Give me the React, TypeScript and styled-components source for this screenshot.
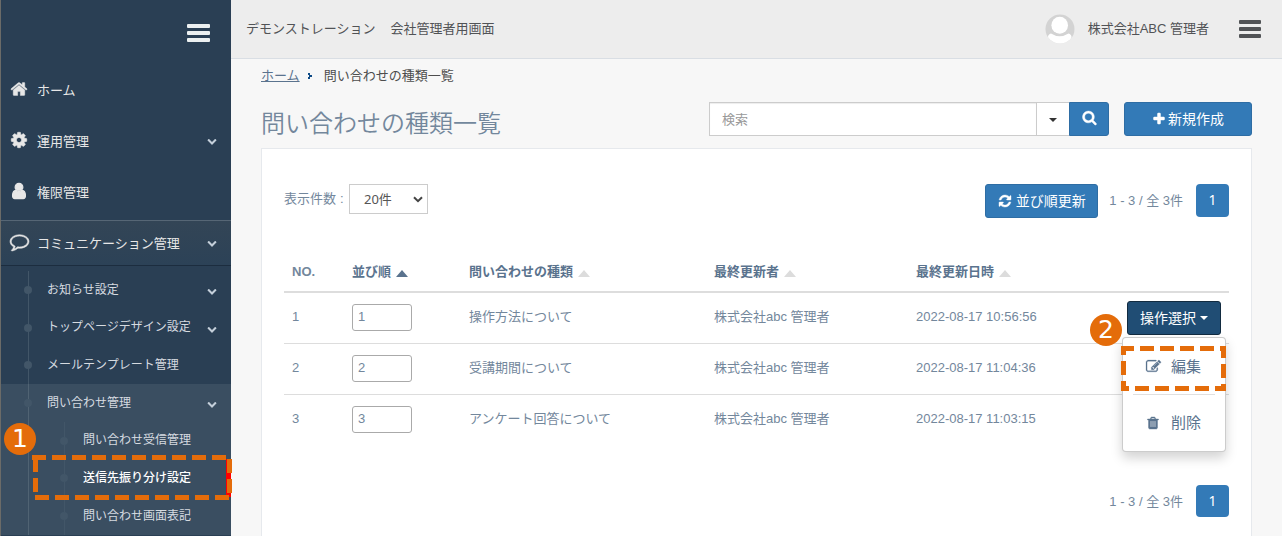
import React from "react";
import styled, { createGlobalStyle, css } from "styled-components";

const GlobalStyle = createGlobalStyle`
  *, *::before, *::after { box-sizing: border-box; }
  html, body { margin: 0; padding: 0; overflow: hidden; }
  body {
    font-family: "Liberation Sans", "Noto Sans CJK JP", sans-serif;
    font-size: 13px;
    line-height: 20px;
    color: #73879c;
    background: #f7f7f7;
  }
  input, select, button { font: inherit; }
`;

const ICONS = {
  home: "M1472 992v480q0 26-19 45t-45 19h-384v-384h-256v384h-384q-26 0-45-19t-19-45v-480q0-1 .5-3t.5-3l575-474 575 474q1 2 1 6zm223-69l-62 74q-8 9-21 11h-3q-13 0-21-7l-692-577-692 577q-12 8-24 7-13-2-21-11l-62-74q-8-10-7-23.5t11-21.5l719-599q32-26 76-26t76 26l244 204v-195q0-14 9-23t23-9h192q14 0 23 9t9 23v408l219 182q10 8 11 21.5t-7 23.5z",
  cog: "M1152 896q0-106-75-181t-181-75-181 75-75 181 75 181 181 75 181-75 75-181zm512-109v222q0 12-8 23t-20 13l-185 28q-19 54-39 91 35 50 107 138 10 12 10 25t-9 23q-27 37-99 108t-94 71q-12 0-26-9l-138-108q-44 23-91 38-16 136-29 186-7 28-36 28h-222q-14 0-24.5-8.5t-11.5-21.5l-28-184q-49-16-90-37l-141 107q-10 9-25 9-14 0-25-11-126-114-165-168-7-10-7-23 0-12 8-23 15-21 51-66.5t54-70.5q-27-50-41-99l-183-27q-13-2-21-12.5t-8-23.5v-222q0-12 8-23t19-13l186-28q14-46 39-92-40-57-107-138-10-12-10-24 0-10 9-23 26-36 98.5-107.5t94.5-71.5q13 0 26 10l138 107q44-23 91-38 16-136 29-186 7-28 36-28h222q14 0 24.5 8.5t11.5 21.5l28 184q49 16 90 37l142-107q9-9 24-9 13 0 25 10 129 119 165 170 7 8 7 22 0 12-8 23-15 21-51 66.5t-54 70.5q26 50 41 98l183 28q13 2 21 12.5t8 23.5z",
  user: "M1536 1399q0 109-62.5 187t-150.5 78h-854q-88 0-150.5-78t-62.5-187q0-85 8.5-160.5t31.5-152 58.5-131 94-89 134.5-34.5q131 128 313 128t313-128q76 0 134.5 34.5t94 89 58.5 131 31.5 152 8.5 160.5zm-256-887q0 159-112.5 271.5t-271.5 112.5-271.5-112.5-112.5-271.5 112.5-271.5 271.5-112.5 271.5 112.5 112.5 271.5z",
  comment: "M896 384q-204 0-381.5 69.5t-282 187.5-104.5 255q0 112 71.5 213.5t201.5 175.5l87 50-27 96q-24 91-70 172 152-63 275-171l43-38 57 6q69 8 130 8 204 0 381.5-69.5t282-187.5 104.5-255-104.5-255-282-187.5-381.5-69.5zm896 512q0 174-120 321.5t-326 233-450 85.5q-70 0-145-8-198 175-460 242-49 14-114 22h-5q-15 0-27-10.5t-16-27.5v-1q-3-4-.5-12t2-10 4.5-9.5l6-9 7-8.5 8-9q7-8 31-34.5t34.5-38 31-39.5 32.5-51 27-59 26-76q-157-89-247.5-220t-90.5-281q0-130 71-248.5t191-204.5 286-136.5 348-50.5 348 50.5 286 136.5 191 204.5 71 248.5z",
  edit: "M888 1184l116-116-152-152-116 116v56h96v96h56zm440-720q-16-16-33 1l-350 350q-17 17-1 33t33-1l350-350q17-17 1-33zm80 594v190q0 119-84.5 203.5t-203.5 84.5h-832q-119 0-203.5-84.5t-84.5-203.5v-832q0-119 84.5-203.5t203.5-84.5h832q63 0 117 25 15 7 18 23 3 17-9 29l-49 49q-14 14-32 8-23-6-45-6h-832q-66 0-113 47t-47 113v832q0 66 47 113t113 47h832q66 0 113-47t47-113v-126q0-13 9-22l64-64q15-15 35-7t20 29zm-96-738l288 288-672 672h-288v-288zm444 132l-92 92-288-288 92-92q28-28 68-28t68 28l152 152q28 28 28 68t-28 68z",
  trash: "M704 1376v-704q0-14-9-23t-23-9h-64q-14 0-23 9t-9 23v704q0 14 9 23t23 9h64q14 0 23-9t9-23zm256 0v-704q0-14-9-23t-23-9h-64q-14 0-23 9t-9 23v704q0 14 9 23t23 9h64q14 0 23-9t9-23zm256 0v-704q0-14-9-23t-23-9h-64q-14 0-23 9t-9 23v704q0 14 9 23t23 9h64q14 0 23-9t9-23zm-544-992h448l-48-117q-7-9-17-11h-317q-10 2-17 11zm928 32v64q0 14-9 23t-23 9h-96v948q0 83-47 143.5t-113 60.5h-832q-66 0-113-58.5t-47-141.5v-952h-96q-14 0-23-9t-9-23v-64q0-14 9-23t23-9h309l70-167q15-37 54-63t79-26h320q40 0 79 26t54 63l70 167h309q14 0 23 9t9 23z",
  refresh: "M1639 1056q0 5-1 7-64 268-268 434.5t-478 166.5q-146 0-282.5-55t-243.5-157l-129 129q-19 19-45 19t-45-19-19-45v-448q0-26 19-45t45-19h448q26 0 45 19t19 45-19 45l-137 137q71 66 161 102t187 36q134 0 250-65t186-179q11-17 53-117 8-23 30-23h192q13 0 22.5 9.5t9.5 22.5zm25-800v448q0 26-19 45t-45 19h-448q-26 0-45-19t-19-45 19-45l138-138q-148-137-349-137-134 0-250 65t-186 179q-11 17-53 117-8 23-30 23h-199q-13 0-22.5-9.5t-9.5-22.5v-7q65-268 270-434.5t480-166.5q146 0 284 55.5t245 156.5l130-129q19-19 45-19t45 19 19 45z",
  search: "M1216 832q0-185-131.5-316.5t-316.5-131.5-316.5 131.5-131.5 316.5 131.5 316.5 316.5 131.5 316.5-131.5 131.5-316.5zm512 832q0 52-38 90t-90 38q-54 0-90-38l-343-342q-179 124-399 124-143 0-273.5-55.5t-225-150-150-225-55.5-273.5 55.5-273.5 150-225 225-150 273.5-55.5 273.5 55.5 225 150 150 225 55.5 273.5q0 220-124 399l343 343q37 37 37 90z",
  plus: "M1600 736v192q0 40-28 68t-68 28h-416v416q0 40-28 68t-68 28h-192q-40 0-68-28t-28-68v-416h-416q-40 0-68-28t-28-68v-192q0-40 28-68t68-28h416v-416q0-40 28-68t68-28h192q40 0 68 28t28 68v416h416q40 0 68 28t28 68z",
  chevron: "M1683 808l-742 741q-19 19-45 19t-45-19l-742-741q-19-19-19-45.5t19-45.5l166-165q19-19 45-19t45 19l531 531 531-531q19-19 45-19t45 19l166 165q19 19 19 45.5t-19 45.5z",
};

type IconName = keyof typeof ICONS;

const IconSvg = styled.svg<{ $bold?: number }>`
  display: block;
  flex: none;
  overflow: visible;
  fill: currentColor;
  stroke: currentColor;
  stroke-width: ${(p) => p.$bold ?? 0};
`;

const Icon = ({ name, size, bold }: { name: IconName; size: number; bold?: number }) => (
  <IconSvg width={size} height={size} viewBox="0 0 1792 1792" $bold={bold}>
    <path d={ICONS[name]} />
  </IconSvg>
);

const Page = styled.div`
  position: relative;
  display: flex;
  width: 1282px;
  height: 536px;
  overflow: hidden;
`;

/* ---------- sidebar ---------- */

const Sidebar = styled.nav`
  width: 231px;
  height: 536px;
  flex: none;
  overflow: hidden;
  background: #2a3f54;
  border-left: 1px solid #6b6b68;
`;

const SidebarTop = styled.div`
  display: flex;
  justify-content: flex-end;
  height: 67px;
  padding: 24px 21px 0 0;
`;

const Bars = styled.div<{ $color: string; $width: number }>`
  width: ${(p) => p.$width}px;
  height: 18px;
  display: flex;
  flex-direction: column;
  justify-content: space-between;
  span {
    height: 4px;
    border-radius: 1px;
    background: ${(p) => p.$color};
  }
`;

const Hamburger = ({ color, width }: { color: string; width: number }) => (
  <Bars $color={color} $width={width}>
    <span />
    <span />
    <span />
  </Bars>
);

const MenuItem = styled.div<{ $active?: boolean }>`
  display: flex;
  align-items: center;
  height: 46px;
  margin-bottom: 5px;
  padding: 0 14px 0 9px;
  color: #e7e7e7;
  ${(p) =>
    p.$active &&
    css`
      margin-bottom: 0;
      background: linear-gradient(#334556, #2c4257);
      border-top: 1px solid #566675;
      border-bottom: 1px solid #1c2d3f;
    `}
`;

const MenuIcon = styled.span`
  width: 27px;
  padding-bottom: 3px;
`;

const MenuLabel = styled.span`
  flex: 1;
  padding-top: 1px;
  white-space: nowrap;
`;

const Chevron = styled.span<{ $low?: boolean }>`
  color: #c4cfda;
  padding-top: ${(p) => (p.$low ? 4 : 0)}px;
`;

const Tree = styled.ul<{ $line: number }>`
  list-style: none;
  margin: 0;
  padding: 0;
  background: linear-gradient(#425668, #425668) ${(p) => p.$line}px 0 / 1px 100% no-repeat;
`;

const Branch = styled.li<{ $open?: boolean }>`
  background: ${(p) => (p.$open ? "rgba(255, 255, 255, 0.08)" : "none")};
`;

const TreeRow = styled.div<{ $depth: number; $current?: boolean }>`
  display: flex;
  align-items: center;
  height: 37.67px;
  padding: 0 ${(p) => (p.$current ? 9 : 14)}px 1.5px ${(p) => (p.$depth === 1 ? 23 : 59)}px;
  font-size: 12px;
  font-weight: ${(p) => (p.$current ? 500 : 400)};
  color: ${(p) => (p.$current ? "#ffffff" : "#d6dbe0")};
  border-right: ${(p) => (p.$current ? "5px solid #ff0000" : "none")};
`;

const Dot = styled.span`
  width: 8px;
  height: 8px;
  margin: 2px 15px 0 0;
  border-radius: 50%;
  background: #425668;
`;

const TreeWrap = styled.div`
  padding-top: 5px;
`;

/* ---------- main column ---------- */

const Main = styled.main`
  flex: 1;
  min-width: 0;
  display: flex;
  flex-direction: column;
`;

const TopBar = styled.header`
  display: flex;
  align-items: center;
  height: 59px;
  flex: none;
  padding: 0 21px 0 15px;
  background: #ededed;
  border-bottom: 1px solid #d9dee4;
  color: #515356;
`;

const SiteName = styled.div`
  display: flex;
  flex: 1;
  gap: 15px;
  white-space: nowrap;
`;

const UserName = styled.span`
  margin: 0 30px 0 13px;
  white-space: nowrap;
`;

const Content = styled.div`
  flex: 1;
  display: flex;
  flex-direction: column;
  min-height: 0;
  padding: 0 30px;
`;

const Breadcrumb = styled.div`
  display: flex;
  align-items: center;
  height: 33px;
  color: #4d4d4d;
  a {
    color: #5a738e;
    text-decoration: underline;
  }
  svg {
    margin: 1px 11px 0 7px;
  }
`;

const TitleRow = styled.div`
  display: flex;
  align-items: center;
  height: 56px;
`;

const Title = styled.h3`
  flex: 1;
  margin: 8px 0 0;
  font-size: 24px;
  font-weight: 350;
  line-height: 30px;
`;

const SearchGroup = styled.div`
  display: flex;
  height: 34px;
  margin: -2px 15px 0 0;
`;

const SearchInput = styled.input`
  width: 328px;
  padding: 1px 12px 0;
  border: 1px solid #ccc;
  border-radius: 0;
  background: #fff;
  box-shadow: inset 0 1px 1px rgba(0, 0, 0, 0.075);
  &::placeholder {
    color: #999;
    opacity: 1;
  }
`;

const CaretButton = styled.button`
  display: flex;
  align-items: center;
  justify-content: center;
  width: 32px;
  padding: 1px 0 0;
  border: 1px solid #ccc;
  border-left: 0;
  border-right: 0;
  background: #fff;
`;

const Caret = styled.span<{ $color: string }>`
  border-top: 4px solid ${(p) => p.$color};
  border-left: 4px solid transparent;
  border-right: 4px solid transparent;
`;

const Button = styled.button<{ $width: number; $dark?: boolean; $joined?: boolean; $gap?: number }>`
  display: flex;
  align-items: center;
  justify-content: center;
  gap: ${(p) => p.$gap ?? 4}px;
  width: ${(p) => p.$width}px;
  height: 34px;
  padding: 0;
  border: 1px solid ${(p) => (p.$dark ? "#122b40" : "#2e6da4")};
  border-radius: ${(p) => (p.$joined ? "0 3px 3px 0" : "3px")};
  background: ${(p) => (p.$dark ? "#204d74" : "#337ab7")};
  color: #fff;
  font-size: 14px;
  white-space: nowrap;
`;

const SearchIcon = styled.span`
  margin: -3px 0 0 1px;
`;

const CreateSlot = styled.div`
  margin-top: -2px;
`;

const Panel = styled.section`
  flex: 1;
  border: 1px solid #e6e9ed;
  border-bottom: 0;
  background: #fff;
  padding: 35px 22px 0;
`;

const Toolbar = styled.div`
  display: flex;
  align-items: flex-start;
  height: 68px;
`;

const CountLabel = styled.label`
  display: flex;
  flex: 1;
  line-height: 28px;
`;

const CountSelect = styled.span`
  display: flex;
  align-items: center;
  justify-content: space-between;
  width: 79px;
  height: 30px;
  padding: 0 4px 0 14px;
  border: 1px solid #ccc;
  color: #555;
  font-family: "Noto Sans", "Noto Sans CJK JP", sans-serif;
  background: #fff;
`;

const CountText = styled.span`
  width: 65px;
  padding-top: 1px;
  white-space: nowrap;
  i {
    margin-left: 4px;
    font-style: normal;
  }
`;

const PageInfo = styled.span`
  margin: 7px 13px 0 11px;
  white-space: pre;
`;

const PageNumber = styled.span<{ $height: number }>`
  width: 33px;
  height: ${(p) => p.$height}px;
  border-radius: 4px;
  background: #337ab7;
  color: #fff;
  font-family: "Noto Sans", sans-serif;
  font-size: 14px;
  line-height: 31px;
  text-align: center;
`;

const Table = styled.table`
  width: 945px;
  table-layout: fixed;
  border-collapse: separate;
  border-spacing: 0;
`;

const HeadCell = styled.th<{ $width?: number }>`
  ${(p) => p.$width && `width: ${p.$width}px;`}
  height: 41px;
  padding: 1px 8px 0;
  border-bottom: 2px solid #ddd;
  color: #5a738e;
  font-weight: 700;
  text-align: left;
  white-space: nowrap;
`;

const HeadInner = styled.span<{ $muted?: boolean }>`
  display: flex;
  align-items: center;
  gap: 5px;
  color: ${(p) => (p.$muted ? "#73879c" : "#5a738e")};
`;

const SortMark = styled.span<{ $on?: boolean }>`
  margin-top: 2px;
  border-bottom: 7px solid ${(p) => (p.$on ? "#5a738e" : "#dcdcdc")};
  border-left: 6.5px solid transparent;
  border-right: 6.5px solid transparent;
`;

const Cell = styled.td<{ $last?: boolean }>`
  height: 51px;
  padding: 0 8px 3px;
  border-bottom: 1px solid ${(p) => (p.$last ? "transparent" : "#ddd")};
  white-space: nowrap;
`;

const OrderInput = styled.input`
  display: block;
  width: 60px;
  height: 27px;
  margin-top: 2px;
  padding: 0 5px 2px;
  border: 1px solid #aaa;
  border-radius: 3px;
  background: #fff;
  color: #73879c;
`;

const ActionWrap = styled.div`
  position: relative;
  width: 94px;
  margin: 3px 0 0 auto;
`;

const Menu = styled.div`
  position: absolute;
  z-index: 2;
  top: 36px;
  right: -5px;
  width: 104px;
  height: 115px;
  padding: 0 10px;
  border: 1px solid rgba(0, 0, 0, 0.2);
  border-radius: 4px;
  background: #fff;
  box-shadow: 0 6px 12px rgba(0, 0, 0, 0.175);
`;

const MenuEntry = styled.div<{ $divided?: boolean }>`
  display: flex;
  align-items: center;
  height: ${(p) => (p.$divided ? 57 : 55)}px;
  padding: ${(p) => (p.$divided ? 1 : 0)}px 0 0 13px;
  color: #5a738e;
  font-size: 15px;
  border-bottom: ${(p) => (p.$divided ? "1px solid #e0e0e0" : "none")};
  span {
    width: 25px;
  }
`;

const Footer = styled.div`
  display: flex;
  justify-content: flex-end;
  padding-top: 39px;
`;

/* ---------- callouts ---------- */

const Overlay = styled.svg`
  position: absolute;
  z-index: 5;
  left: 0;
  top: 0;
  pointer-events: none;
`;

const Badge = styled.span<{ $x: number; $y: number }>`
  position: absolute;
  z-index: 6;
  left: ${(p) => p.$x}px;
  top: ${(p) => p.$y}px;
  width: 32px;
  height: 32px;
  border-radius: 50%;
  background: #e46c0a;
  color: #fff;
  font: 25px/31px "DejaVu Sans", sans-serif;
  text-align: center;
`;

const MENU: {
  icon: IconName;
  label: string;
  size: number;
  bold: number;
  expandable?: boolean;
  active?: boolean;
}[] = [
  { icon: "home", label: "ホーム", size: 18, bold: 40 },
  { icon: "cog", label: "運用管理", size: 18, bold: 60 },
  { icon: "user", label: "権限管理", size: 18, bold: 120 },
  { icon: "comment", label: "コミュニケーション管理", size: 19, bold: 50, expandable: true, active: true },
];
MENU[1].expandable = true;

const BRANCHES = [
  { label: "お知らせ設定", expandable: true },
  { label: "トップページデザイン設定", expandable: true },
  { label: "メールテンプレート管理", expandable: false },
];

const LEAVES = ["問い合わせ受信管理", "送信先振り分け設定", "問い合わせ画面表記"];

const ROWS = [
  { kind: "操作方法について", date: "2022-08-17 10:56:56" },
  { kind: "受講期間について", date: "2022-08-17 11:04:36" },
  { kind: "アンケート回答について", date: "2022-08-17 11:03:15" },
];

const COLUMNS = [
  { label: "NO.", width: 60, sort: "none" },
  { label: "並び順", width: 117, sort: "on" },
  { label: "問い合わせの種類", width: 245, sort: "off" },
  { label: "最終更新者", width: 202, sort: "off" },
  { label: "最終更新日時", width: 190, sort: "off" },
];

export default function App() {
  return (
    <Page>
      <GlobalStyle />
      <Sidebar>
        <SidebarTop>
          <Hamburger color="#ecf0f1" width={23} />
        </SidebarTop>
        {MENU.map((m) => (
          <MenuItem key={m.label} $active={m.active}>
            <MenuIcon>
              <Icon name={m.icon} size={m.size} bold={m.bold} />
            </MenuIcon>
            <MenuLabel>{m.label}</MenuLabel>
            {m.expandable && (
              <Chevron>
                <Icon name="chevron" size={10} />
              </Chevron>
            )}
          </MenuItem>
        ))}
        <TreeWrap>
          <Tree $line={27}>
            {BRANCHES.map((b) => (
              <Branch key={b.label}>
                <TreeRow $depth={1}>
                  <Dot />
                  <MenuLabel>{b.label}</MenuLabel>
                  {b.expandable && (
                    <Chevron $low>
                      <Icon name="chevron" size={10} />
                    </Chevron>
                  )}
                </TreeRow>
              </Branch>
            ))}
            <Branch $open>
              <TreeRow $depth={1}>
                <Dot />
                <MenuLabel>問い合わせ管理</MenuLabel>
                <Chevron $low>
                  <Icon name="chevron" size={10} />
                </Chevron>
              </TreeRow>
              <Tree $line={63}>
                {LEAVES.map((label, i) => (
                  <li key={label}>
                    <TreeRow $depth={2} $current={i === 1}>
                      <Dot />
                      <MenuLabel>{label}</MenuLabel>
                    </TreeRow>
                  </li>
                ))}
              </Tree>
            </Branch>
          </Tree>
        </TreeWrap>
      </Sidebar>

      <Main>
        <TopBar>
          <SiteName>
            <span>デモンストレーション</span>
            <span>会社管理者用画面</span>
          </SiteName>
          <svg width="30" height="30" viewBox="0 0 30 30">
            <defs>
              <clipPath id="avatar">
                <circle cx="15" cy="15" r="14.5" />
              </clipPath>
            </defs>
            <g clipPath="url(#avatar)">
              <rect width="30" height="30" fill="#d3d3d3" />
              <ellipse cx="14.7" cy="11.3" rx="8.3" ry="8.5" fill="#fff" />
              <path d="M3 30V23Q3 20.500 6 19.500Q14.700 25 23.500 19.500Q26.500 20.500 26.500 23V30Z" fill="#fff" />
            </g>
          </svg>
          <UserName>株式会社ABC 管理者</UserName>
          <Hamburger color="#515356" width={22} />
        </TopBar>

        <Content>
          <Breadcrumb>
            <a>ホーム</a>
            <svg width="6" height="8" viewBox="0 0 6 8" fill="#0d4a86">
              <path d="M1 1h2v2h2v2H3v2H1V5h1V3H1z" />
            </svg>
            <span>問い合わせの種類一覧</span>
          </Breadcrumb>

          <TitleRow>
            <Title>問い合わせの種類一覧</Title>
            <SearchGroup>
              <SearchInput placeholder="検索" />
              <CaretButton>
                <Caret $color="#333" />
              </CaretButton>
              <Button $width={40} $joined>
                <SearchIcon>
                  <Icon name="search" size={15} bold={50} />
                </SearchIcon>
              </Button>
            </SearchGroup>
            <CreateSlot>
              <Button $width={128} $gap={2}>
                <Icon name="plus" size={14} bold={60} />
                新規作成
              </Button>
            </CreateSlot>
          </TitleRow>

          <Panel>
            <Toolbar>
              <CountLabel>
                <CountText>
                  表示件数<i>:</i>
                </CountText>
                <CountSelect>
                  20件
                  <svg width="10" height="7" viewBox="0 0 10 7" fill="none" stroke="#444" strokeWidth="2">
                    <path d="M1 1.200L5 5.200L9 1.200" />
                  </svg>
                </CountSelect>
              </CountLabel>
              <Button $width={113}>
                <Icon name="refresh" size={14} bold={50} />
                並び順更新
              </Button>
              <PageInfo>1 - 3 / 全 3件</PageInfo>
              <PageNumber $height={33}>1</PageNumber>
            </Toolbar>

            <Table>
              <thead>
                <tr>
                  {COLUMNS.map((c) => (
                    <HeadCell key={c.label} $width={c.width}>
                      <HeadInner $muted={c.sort === "none"}>
                        {c.label}
                        {c.sort !== "none" && <SortMark $on={c.sort === "on"} />}
                      </HeadInner>
                    </HeadCell>
                  ))}
                  <HeadCell />
                </tr>
              </thead>
              <tbody>
                {ROWS.map((r, i) => {
                  const last = i === ROWS.length - 1;
                  return (
                    <tr key={r.kind}>
                      <Cell $last={last}>{i + 1}</Cell>
                      <Cell $last={last}>
                        <OrderInput defaultValue={i + 1} />
                      </Cell>
                      <Cell $last={last}>{r.kind}</Cell>
                      <Cell $last={last}>株式会社abc 管理者</Cell>
                      <Cell $last={last}>{r.date}</Cell>
                      <Cell $last={last}>
                        {i === 0 && (
                          <ActionWrap>
                            <Button $width={94} $dark>
                              操作選択
                              <Caret $color="#fff" />
                            </Button>
                            <Menu>
                              <MenuEntry $divided>
                                <span>
                                  <Icon name="edit" size={15} bold={30} />
                                </span>
                                編集
                              </MenuEntry>
                              <MenuEntry>
                                <span>
                                  <Icon name="trash" size={14} bold={50} />
                                </span>
                                削除
                              </MenuEntry>
                            </Menu>
                          </ActionWrap>
                        )}
                      </Cell>
                    </tr>
                  );
                })}
              </tbody>
            </Table>

            <Footer>
              <PageInfo>1 - 3 / 全 3件</PageInfo>
              <PageNumber $height={32}>1</PageNumber>
            </Footer>
          </Panel>
        </Content>
      </Main>

      <Overlay width="1282" height="536" fill="none" stroke="#e46c0a" strokeWidth="5">
        <path d="M32 457.500H231" strokeDasharray="14 6" />
        <path d="M35.500 455V472M35.500 478V492" />
        <path d="M35 497.500H231" strokeDasharray="14 6" />
        <path d="M229.500 459V473M229.500 479V493" />
        <path d="M1121 348.500H1134M1140 348.500H1226" strokeDasharray="14 6" />
        <path d="M1123.500 346V355M1123.500 361V375M1123.500 381V391" />
        <path d="M1121 388.500H1129M1135 388.500H1209M1215 388.500H1226" strokeDasharray="14 6" />
        <path d="M1223.500 346V358M1223.500 364V378M1223.500 384V391" />
      </Overlay>
      <Badge $x={4} $y={423}>1</Badge>
      <Badge $x={1090} $y={314}>2</Badge>
    </Page>
  );
}
